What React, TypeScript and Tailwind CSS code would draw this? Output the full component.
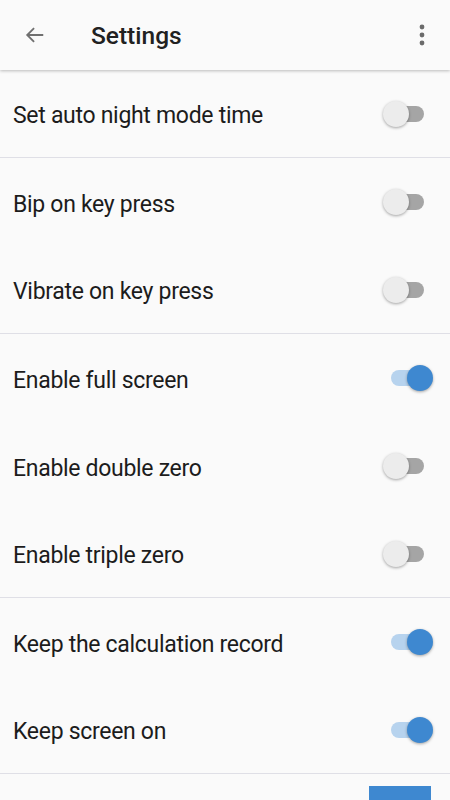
import React, { useState } from "react";

type Row = { label: string; on: boolean };

const groups: Row[][] = [
  [{ label: "Set auto night mode time", on: false }],
  [
    { label: "Bip on key press", on: false },
    { label: "Vibrate on key press", on: false },
  ],
  [
    { label: "Enable full screen", on: true },
    { label: "Enable double zero", on: false },
    { label: "Enable triple zero", on: false },
  ],
  [
    { label: "Keep the calculation record", on: true },
    { label: "Keep screen on", on: true },
  ],
];

const Toggle: React.FC<{ on: boolean; onClick: () => void }> = ({ on, onClick }) => (
  <button
    onClick={onClick}
    className="relative w-[50px] h-[26px] flex items-center shrink-0"
    aria-pressed={on}
  >
    <span
      className={`absolute left-[8px] w-[33px] h-[16px] rounded-full ${
        on ? "bg-[#b7d3ee]" : "bg-[#a5a5a5]"
      }`}
    />
    <span
      className={`absolute top-0 w-[26px] h-[26px] rounded-full shadow-[0_1px_3px_rgba(0,0,0,0.35)] ${
        on ? "left-[24px] bg-[#3e88d0]" : "left-0 bg-[#ececec]"
      }`}
    />
  </button>
);

export default function App() {
  const [state, setState] = useState(groups.map((g) => g.map((r) => r.on)));

  const flip = (gi: number, ri: number) =>
    setState((s) => s.map((g, i) => (i === gi ? g.map((v, j) => (j === ri ? !v : v)) : g)));

  return (
    <div
      className="w-[450px] h-[800px] overflow-hidden bg-[#fafafa] text-[#1c1c1c]"
      style={{ fontFamily: "Roboto, 'Noto Sans', sans-serif" }}
    >
      {/* Toolbar */}
      <header className="relative z-10 h-[70px] flex items-center bg-[#fafafa] shadow-[0_1px_3px_rgba(0,0,0,0.25)]">
        <button className="w-[70px] h-full flex items-center justify-center text-[#707070]">
          <svg width="22" height="22" viewBox="0 0 24 24" fill="none" stroke="currentColor" strokeWidth="2">
            <path d="M21 12H3.5M11 4.5L3.5 12l7.5 7.5" />
          </svg>
        </button>
        <h1 className="ml-[21px] pt-[2px] text-[24.5px] font-medium text-[#212121]">Settings</h1>
        <button className="ml-auto w-[56px] h-full flex items-center justify-center text-[#6b6b6b]">
          <svg width="6" height="22" viewBox="0 0 6 22" fill="currentColor">
            <circle cx="3" cy="3" r="2.4" />
            <circle cx="3" cy="11" r="2.4" />
            <circle cx="3" cy="19" r="2.4" />
          </svg>
        </button>
      </header>

      {/* Preference list */}
      <div>
        {groups.map((g, gi) => (
          <section key={gi} className="border-b border-[#dfdfe6]">
            {g.map((r, ri) => (
              <div
                key={r.label}
                className="h-[88px] last:h-[87px] flex items-center pl-[13px] pr-[17px]"
              >
                <span className="flex-1 pt-[6px] text-[23px] tracking-[-0.3px]">{r.label}</span>
                <Toggle on={state[gi][ri]} onClick={() => flip(gi, ri)} />
              </div>
            ))}
          </section>
        ))}
        <div className="flex justify-end pr-[19px] pt-[12px]">
          <button className="w-[62px] h-[40px] bg-[#3e88d0]" />
        </div>
      </div>
    </div>
  );
}
